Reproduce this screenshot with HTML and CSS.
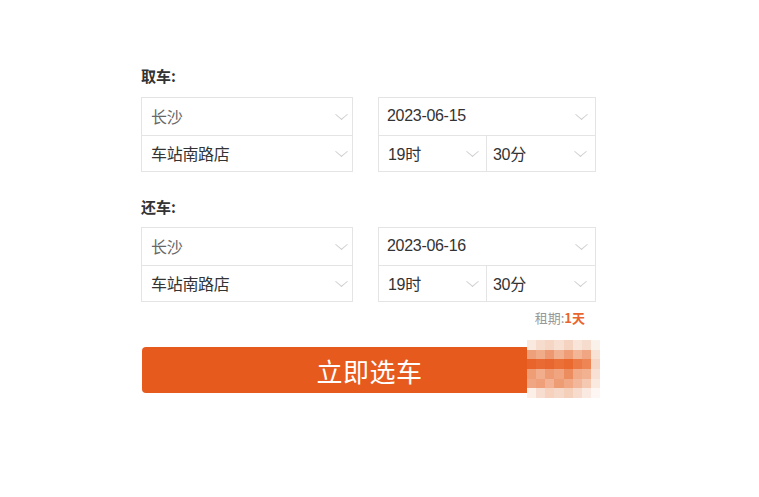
FILE: index.html
```html
<!DOCTYPE html>
<html lang="zh-CN">
<head>
<meta charset="utf-8">
<title>租车</title>
<link rel="stylesheet" href="styles.css">
</head>
<body>
<div class="panel">
  <section class="group">
    <div class="label">取车:</div>
    <div class="fields">
      <div class="box left">
        <div class="cell"><span class="val light">长沙</span><i class="chev"></i></div>
        <div class="cell"><span class="val">车站南路店</span><i class="chev"></i></div>
      </div>
      <div class="box right">
        <div class="cell"><span class="val">2023-06-15</span><i class="chev"></i></div>
        <div class="cell split">
          <div class="sub hour"><span class="val">19时</span><i class="chev"></i></div>
          <div class="sub min"><span class="val">30分</span><i class="chev"></i></div>
        </div>
      </div>
    </div>
  </section>
  <section class="group second">
    <div class="label">还车:</div>
    <div class="fields">
      <div class="box left">
        <div class="cell"><span class="val light">长沙</span><i class="chev"></i></div>
        <div class="cell"><span class="val">车站南路店</span><i class="chev"></i></div>
      </div>
      <div class="box right">
        <div class="cell"><span class="val">2023-06-16</span><i class="chev"></i></div>
        <div class="cell split">
          <div class="sub hour"><span class="val">19时</span><i class="chev"></i></div>
          <div class="sub min"><span class="val">30分</span><i class="chev"></i></div>
        </div>
      </div>
    </div>
  </section>
  <div class="term">租期:<b>1天</b></div>
  <div class="btn-wrap">
    <button class="btn">立即选车</button>
    <div class="mosaic">
      <span style="background:#f9e9df"></span><span style="background:#f6dccd"></span><span style="background:#f5d6c4"></span><span style="background:#f7dfd1"></span><span style="background:#f4d3c1"></span><span style="background:#f8e4d8"></span><span style="background:#f6dccd"></span><span style="background:#fbf1eb"></span>
      <span style="background:#eea07a"></span><span style="background:#f0ab88"></span><span style="background:#ed9870"></span><span style="background:#f1b090"></span><span style="background:#ee9d76"></span><span style="background:#f2b596"></span><span style="background:#f0a683"></span><span style="background:#f8e2d5"></span>
      <span style="background:#e8642a"></span><span style="background:#e96b33"></span><span style="background:#e86630"></span><span style="background:#ea7038"></span><span style="background:#e9692f"></span><span style="background:#ec7a46"></span><span style="background:#ed8555"></span><span style="background:#f6d6c5"></span>
      <span style="background:#ef9d75"></span><span style="background:#f2ad8c"></span><span style="background:#ee9a72"></span><span style="background:#f0a47f"></span><span style="background:#ec8d60"></span><span style="background:#f1ab89"></span><span style="background:#f2b191"></span><span style="background:#f8e1d4"></span>
      <span style="background:#f0a682"></span><span style="background:#ef9f79"></span><span style="background:#f2b293"></span><span style="background:#ee9c74"></span><span style="background:#f1a985"></span><span style="background:#f3b89b"></span><span style="background:#f5c8b1"></span><span style="background:#fae9df"></span>
      <span style="background:#fbefe8"></span><span style="background:#f7ddcf"></span><span style="background:#f5d1be"></span><span style="background:#f6d8c8"></span><span style="background:#f4cfba"></span><span style="background:#f7dccd"></span><span style="background:#fae9e0"></span><span style="background:#fdf6f2"></span>
    </div>
  </div>
</div>
</body>
</html>
```
FILE: styles.css
```css
* { box-sizing: border-box; }
html, body { margin: 0; padding: 0; background: #fff; }
body {
  font-family: "Microsoft YaHei", "Noto Sans CJK SC", "Liberation Sans", sans-serif;
  color: #333;
  width: 759px;
  height: 497px;
  overflow: hidden;
}
.panel {
  width: 455px;
  margin-left: 141px;
  padding-top: 66px;
}
.label {
  height: 20px;
  line-height: 20px;
  font-size: 15px;
  font-weight: bold;
  color: #333;
  margin-bottom: 11px;
}
.group.second { margin-top: 25px; }
.group.second .label { margin-bottom: 10px; }
.fields {
  display: flex;
  gap: 25px;
}
.box {
  border: 1px solid #e4e4e4;
  background: #fff;
}
.box.left { width: 212px; }
.box.right { width: 218px; }
.cell {
  height: 37px;
  display: flex;
  align-items: center;
  justify-content: space-between;
  padding: 0 6px 1px 9px;
}
.cell + .cell { border-top: 1px solid #e4e4e4; height: 36px; }
.box.right .cell { padding: 0 9px 1px 8px; }
.val {
  font-family: "Liberation Sans", "Noto Sans CJK SC", sans-serif;
  font-size: 16px;
  color: #333;
  letter-spacing: -0.3px;
}
.val.light { color: #666; }
.chev {
  width: 9px;
  height: 9px;
  border-right: 1px solid #cfcfcf;
  border-bottom: 1px solid #cfcfcf;
  transform: translateY(-2px) scaleY(0.85) rotate(45deg);
  display: block;
}
.box.right .cell.split { padding: 0; }
.box.right .cell.split .sub {
  height: 100%;
  display: flex;
  align-items: center;
  justify-content: space-between;
  padding-bottom: 1px;
}
.box.right .cell.split .sub.hour {
  flex: 0 0 108px;
  width: 108px;
  padding-left: 9px;
  padding-right: 9px;
  border-right: 1px solid #e4e4e4;
}
.box.right .cell.split .sub.min {
  flex: 1;
  padding-left: 6px;
  padding-right: 10px;
}
.term {
  margin-top: 8px;
  height: 16px;
  line-height: 16px;
  font-size: 13px;
  color: #999;
  text-align: right;
  padding-right: 11px;
}
.term b { color: #e8652d; font-weight: bold; }
.btn-wrap {
  position: relative;
  margin-top: 21px;
  width: 455px;
}
.btn {
  display: block;
  width: 455px;
  height: 46px;
  margin-left: 1px;
  border: none;
  border-radius: 4px;
  background: #e65a1e;
  color: #fff;
  font-family: "Microsoft YaHei", "Noto Sans CJK SC", sans-serif;
  font-size: 26px;
  letter-spacing: 0.5px;
  padding: 0;
  cursor: pointer;
}
.mosaic {
  position: absolute;
  left: 386px;
  top: -7px;
  width: 73px;
  height: 58px;
  display: grid;
  grid-template-columns: repeat(8, 1fr);
  grid-template-rows: repeat(6, 1fr);
}
.mosaic span { display: block; }
```
